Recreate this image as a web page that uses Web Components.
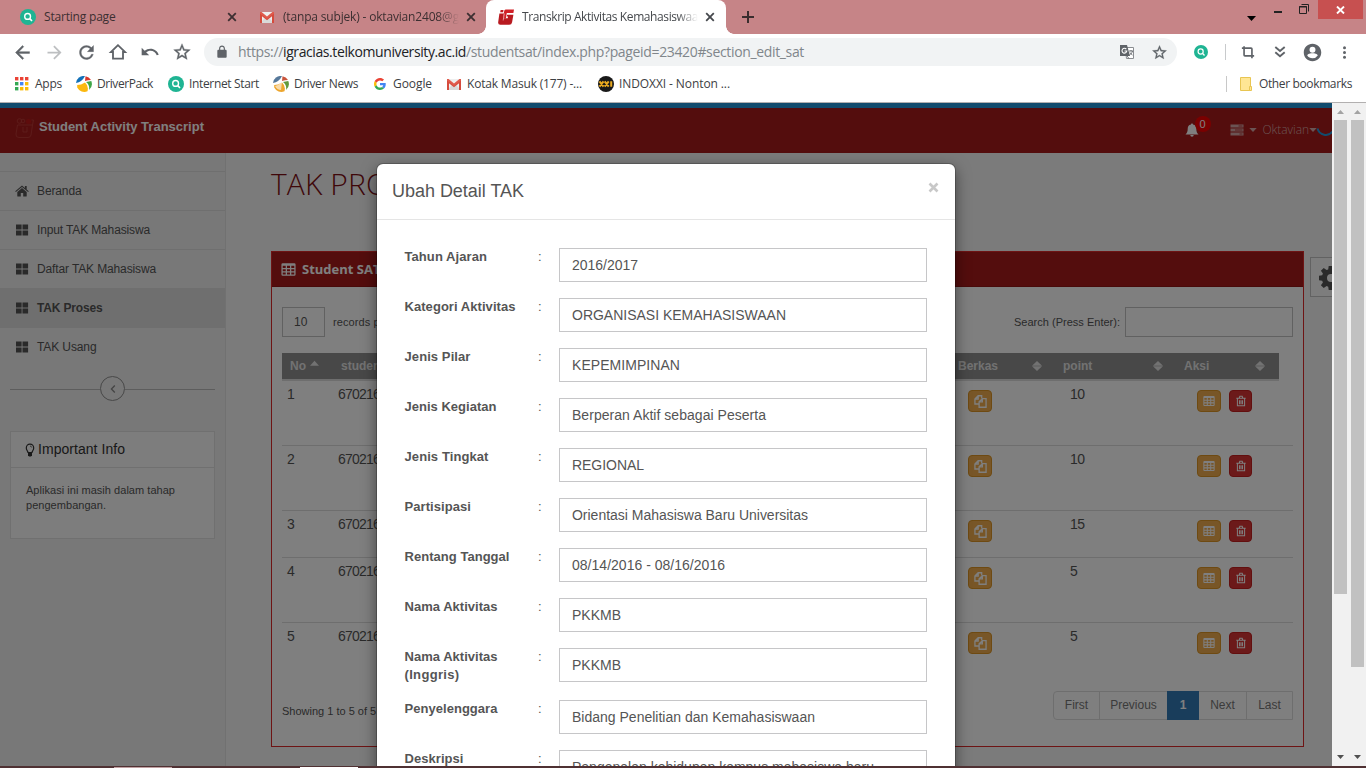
<!DOCTYPE html>
<html lang="id">
<head>
<meta charset="utf-8">
<title>Transkrip Aktivitas Kemahasiswaan</title>
<style>
html,body{margin:0;height:100%;overflow:hidden;background:#fff;font-family:"Liberation Sans",Arial,sans-serif}
</style>
</head>
<body>
<browser-window></browser-window>
<script>
const define=(name,html,setup)=>{
  const tpl=document.createElement('template');
  tpl.innerHTML='<style>*{box-sizing:border-box}</style>'+html;
  customElements.define(name,class extends HTMLElement{
    connectedCallback(){
      if(this.shadowRoot)return;
      const root=this.attachShadow({mode:'open'});
      root.append(tpl.content.cloneNode(true));
      if(setup)setup.call(this,root);
    }
  });
};

/* text run spaced to a given width */
define('fit-text','<style>:host{display:inline-block;white-space:pre;flex:none}</style><slot></slot>',function(){
  const w=parseFloat(this.getAttribute('w'));
  if(!w)return;
  const n=this.textContent.length;
  const nat=this.getBoundingClientRect().width;
  if(nat){this.style.letterSpacing=((w-nat)/n).toFixed(4)+'px';this.style.width=w+'px';}
});

const G='#5f6368';
const mail='<path d="M1 3h14v11H1z" fill="#eee"/><path d="M1 14l5-5 2 1.6L10 9l5 5z" fill="#d9d9d9"/><path d="M1 14V3.4L8 9l7-5.6V14h-2V7.2l-5 4-5-4V14z" fill="#d54b3d"/><path d="M1 3h1.6L8 7.4 13.400 3H15v1.600L8 10 1 4.600z" fill="#e05a4c"/>';
const find='<circle cx="8" cy="8" r="8" fill="#1fb493"/><circle cx="7.600" cy="7.400" r="2.900" fill="none" stroke="#fff" stroke-width="1.400"/><path d="M9.800 9.600l2.200 2.400" stroke="#fff" stroke-width="1.600"/>';
const driver=(c)=>`<circle cx="8" cy="8" r="8" fill="#fff"/><path d="M0 7A8 8 0 0 1 9 0Q6 6 0 7z" fill="${c[0]}"/><path d="M9.500 0.200A8 8 0 0 1 15 4Q12 4 9 5Z" fill="${c[1]}"/><path d="M15.300 5A8 8 0 0 1 13 14Q14 9 10 6Z" fill="${c[2]}"/><path d="M1.200 9Q5 9 9 6.500Q13 10 11.500 15.200A8 8 0 0 1 1.200 11.500z" fill="${c[3]}"/>`;
const icons={
 find:[16,find], mail:[16,mail],
 ig:[16,'<path d="M2.600 1h2.900l-.4 2.300H2.200z" fill="#c01a20"/><path d="M1.400 4.600H6L5.300 9.300h4.400l.3-1.700H8.800l.3-1.900h6.300l-1.300 7.500q-.4 2.600-3 2.600H2.300Q-.2 15.800.2 13z" fill="#b81a20"/><path d="M7.600 .5H16l-.6 3.600H8.800L7.900 9.500H4.900L6.200 2q.2-1.500 1.400-1.500z" fill="#d12027"/><path d="M6.300 4.500L5.200 11.500" stroke="#fff" stroke-width=".5"/>'],
 close:[16,'<path d="M4.200 4.200l7.600 7.600M11.800 4.200l-7.600 7.600" stroke="currentColor" stroke-width="1.800"/>'],
 plus:[16,'<path d="M8 2v12M2 8h12" stroke="#3a2d2e" stroke-width="2"/>'],
 back:[24,`<path d="M20 11H7.830l5.590-5.590L12 4l-8 8 8 8 1.410-1.410L7.830 13H20v-2z" fill="${G}" stroke="${G}" stroke-width=".5"/>`],
 fwd:[24,'<path d="M12 4l-1.410 1.410L16.170 11H4v2h12.170l-5.580 5.590L12 20l8-8z" fill="#bdbfc1"/>'],
 reload:[24,`<path d="M17.650 6.350A7.958 7.958 0 0 0 12 4c-4.420 0-7.990 3.580-7.990 8s3.570 8 7.990 8c3.730 0 6.840-2.550 7.730-6h-2.080A5.990 5.990 0 0 1 12 18c-3.310 0-6-2.690-6-6s2.690-6 6-6c1.660 0 3.140.690 4.220 1.780L13 11h7V4l-2.350 2.350z" fill="${G}" stroke="${G}" stroke-width=".4"/>`],
 home:[24,`<path d="M12 3.800L3.500 12H6v8h12v-8h2.500z" fill="none" stroke="${G}" stroke-width="2.200"/>`],
 undo:[24,`<path d="M12.500 8c-2.650 0-5.050.990-6.900 2.600L2 7v9h9l-3.620-3.620c1.390-1.160 3.160-1.880 5.120-1.880 3.540 0 6.550 2.310 7.600 5.500l2.370-.780C21.080 11.030 17.150 8 12.500 8z" fill="${G}"/>`],
 star:[24,`<path d="M22 9.240l-7.190-.620L12 2 9.190 8.630 2 9.240l5.460 4.730L5.820 21 12 17.270 18.180 21l-1.630-7.030L22 9.240zM12 15.400l-3.760 2.270 1-4.280-3.320-2.880 4.380-.380L12 6.100l1.710 4.040 4.380.380-3.320 2.880 1 4.280L12 15.400z" fill="${G}" stroke="${G}" stroke-width=".4"/>`],
 lock:[24,`<path d="M18 8h-1V6c0-2.760-2.240-5-5-5S7 3.240 7 6v2H6c-1.100 0-2 .900-2 2v10c0 1.100.900 2 2 2h12c1.100 0 2-.900 2-2V10c0-1.100-.900-2-2-2zM9 6c0-1.710 1.290-3.100 3-3.100s3 1.390 3 3.100v2H9z" fill="${G}"/>`],
 trans:[16,`<path d="M6 3.500h8.500v11H7.500z" fill="#fff" stroke="#8a8d91"/><path d="M1 1h7l3 11H1z" fill="${G}"/><path d="M7.300 5.200A2.400 2.400 0 1 0 7.800 7H5.500" fill="none" stroke="#fff" stroke-width="1.100"/><path d="M10 7h4M12 6v1M13.500 7c-.5 2-1.500 3-3 4M11 8.500c.5 1 1.500 2 2.500 2.500M8 12l2 2.500" stroke="${G}" stroke-width=".9" fill="none"/>`],
 crop:[16,`<path d="M1 3.500h10.500q1 0 1 1V15M3.500 1.500v10q0 1 1 1H15" fill="none" stroke="${G}" stroke-width="1.900"/>`],
 chev:[16,`<path d="M3.300 3l4.700 4 4.700-4M3.300 8.300l4.700 4 4.700-4" fill="none" stroke="${G}" stroke-width="1.900"/>`],
 user:[24,`<path d="M12 2C6.480 2 2 6.480 2 12s4.480 10 10 10 10-4.480 10-10S17.520 2 12 2zm0 3.500a3.400 3.400 0 1 1 0 6.800 3.400 3.400 0 0 1 0-6.800zm0 13.200c-2.500 0-4.710-1.280-6-3.220.030-1.990 4-2.680 6-2.680s5.970.690 6 2.680A7.220 7.220 0 0 1 12 18.700z" fill="${G}"/>`],
 dots:[16,`<circle cx="8" cy="3" r="1.600" fill="${G}"/><circle cx="8" cy="8" r="1.600" fill="${G}"/><circle cx="8" cy="13" r="1.600" fill="${G}"/>`],
 apps:[16,[0,1,2].map(r=>[0,1,2].map(c=>`<rect x="${1+c*5}" y="${1+r*5}" width="3.400" height="3.400" fill="${[['#ea4335','#ea4335','#ea4335'],['#34a853','#4285f4','#fbbc05'],['#34a853','#fbbc05','#fbbc05']][r][c]}"/>`).join('')).join('')],
 dp:[16,driver(['#1170b8','#d9372b','#3fa648','#fbb80f'])],
 dn:[16,driver(['#56789a','#c9543b','#629a3c','#eda62e'])+'<path d="M2 10q4-1 7-4l-1 8q-4 0-6-4z" fill="#fff" opacity=".6"/>'],
 google:[48,'<path fill="#EA4335" d="M24 9.500c3.540 0 6.710 1.220 9.210 3.600l6.850-6.850C35.900 2.380 30.470 0 24 0 14.620 0 6.510 5.380 2.560 13.220l7.980 6.190C12.430 13.720 17.740 9.500 24 9.500z"/><path fill="#4285F4" d="M46.980 24.550c0-1.570-.150-3.090-.380-4.550H24v9.020h12.940c-.580 2.960-2.260 5.480-4.780 7.180l7.730 6c4.510-4.180 7.090-10.360 7.090-17.650z"/><path fill="#FBBC05" d="M10.530 28.590c-.480-1.450-.760-2.990-.760-4.590s.270-3.140.760-4.590l-7.980-6.190C.920 16.460 0 20.120 0 24c0 3.880.920 7.540 2.560 10.780l7.970-6.190z"/><path fill="#34A853" d="M24 48c6.480 0 11.930-2.130 15.890-5.810l-7.730-6c-2.150 1.450-4.920 2.300-8.160 2.300-6.260 0-11.570-4.220-13.470-9.910l-7.980 6.190C6.510 42.620 14.620 48 24 48z"/>'],
 xxi:[16,'<circle cx="8" cy="8" r="8" fill="#191919"/><path d="M1.500 5.300l4 5.400M5.500 5.300l-4 5.400M6.700 5.300l4 5.400M10.700 5.300l-4 5.400M13.200 5.300v5.400" stroke="#e9a91f" stroke-width="2"/>'],
 folder:[16,'<path d="M2.500 1.500h10V14.500h-10z" fill="#ffe694" stroke="#e8c552"/><path d="M11.500 10.500h2v4h-2z" fill="#ffe694" stroke="#e8c552"/>'],
 logo:[20,'<g fill="none" stroke="#d8675e" stroke-width=".8" opacity=".45"><circle cx="4.500" cy="3" r="2.300"/><circle cx="8" cy="3" r="1.800"/><path d="M2.500 7h15l-1.500 10q-.5 2.500-3 2.500H4Q.600 19.500 1 16zM8 9v5h4V9M17.500 7l1-5h-2"/></g><circle cx="13.500" cy="3.500" r="2.500" fill="#e01616" opacity=".4"/>'],
 bell:[14,'<path d="M7 0.500c.6 0 1 .4 1 1C10.500 2 11.300 3.700 11.300 6c0 2.800.8 4.200 2.200 5.500H.5C1.900 10.200 2.700 8.800 2.700 6c0-2.300.8-4 3.300-4.500 0-.6.400-1 1-1zM5.300 12h3.400a1.700 1.700 0 0 1-3.400 0z" fill="currentColor"/>'],
 tasks:[14,'<path d="M.5 1.500h13v3H.5zM.5 5.500h13v3H.5zM.5 9.500h13v3H.5z" fill="currentColor"/><path d="M8.500 3h4M5 7h7.500M9.500 11h3" stroke="#a91b1b" stroke-width=".8"/>'],
 house:[14,'<path d="M7 4L2.300 7.900V12q0 .5.5.5H5.800v-3.500h2.400v3.500h3q.5 0 .5-.5V7.900z M7 1.500L.2 7.200l.7.800L7 3l6.100 5 .7-.8L11.700 5.400V2H9.900v2z" fill="currentColor"/>'],
 grid:[14,'<path d="M1 1.500h5.600v5H1zM7.500 1.500h5.600v5H7.500zM1 7.500h5.600v5H1zM7.500 7.500h5.600v5H7.500z" fill="currentColor"/>'],
 bulb:[14,'<path d="M5 9.500C4.800 8 3.300 7 3.300 4.900a3.700 3.700 0 0 1 7.400 0C10.700 7 9.200 8 9 9.500z" fill="none" stroke="currentColor" stroke-width="1.200"/><path d="M5 10h4v2.200L8 13.500H6L5 12.200z" fill="currentColor"/><path d="M7 3q1.500.1 1.700 1.500" stroke="currentColor" stroke-width=".7" fill="none"/>'],
 table:[14,'<path d="M1.600 1.700h10.800q.6 0 .6.600v9.400q0 .6-.6.600H1.600q-.6 0-.6-.6V2.300q0-.6.6-.6zM1 3h12M1 6.100h12M1 9.200h12M5 3v9M9 3v9" fill="none" stroke="currentColor" stroke-width="1.200"/>'],
 files:[14,'<path d="M5 9.700H1V4.300L4.500.8H8.300V3.600M4.500.8v3.500H1M9 4L5.500 7.400v5.800H13V4zM9 4v3.400H5.500" fill="none" stroke="currentColor" stroke-width="1.400"/>'],
 trash:[14,'<path d="M2.800 4.200v8.300h8.400V4.200M1.500 3.700h11M5 3.500l.6-2h2.800l.6 2M5.300 6v4.800M7 6v4.800M8.700 6v4.800" fill="none" stroke="currentColor" stroke-width="1.200"/>'],
 gear:[24,'<path fill-rule="evenodd" d="M9.700 0h4.600l.5 3.400 1.600.7L19.400 2l2.800 2.800-2.100 2.900.7 1.600L24 9.700v4.600l-3.200.5-.7 1.600 2.100 2.900-2.800 2.800-3-2.100-1.600.7-.5 3.300H9.700l-.5-3.300-1.600-.7-2.900 2.100-2.800-2.800 2-2.900-.7-1.600L0 14.300V9.700l3.200-.5.7-1.600L1.900 4.800 4.700 2l2.900 2.100 1.600-.7zM12 8a4 4 0 1 0 0 8 4 4 0 0 0 0-8z" fill="currentColor"/>'],
 left:[14,'<path d="M8.800 3.500L5.400 7l3.400 3.500" fill="none" stroke="currentColor" stroke-width="1.300"/>'],
 caret:[8,'<path d="M.3 2h7.400L4 6z" fill="currentColor"/>'],
 up:[8,'<path d="M0 6h8L4 1.500z" fill="currentColor"/>'],
 sort:[10,'<path d="M0 4.700h10L5 0zM0 5.300h10L5 10z" fill="currentColor"/>']
};
define('ui-icon','<style>:host{display:block;flex:none}svg{display:block}</style>',function(root){
  const i=icons[this.getAttribute('name')],s=this.getAttribute('size')||16;
  const d=document.createElement('div');
  d.innerHTML=`<svg width="${s}" height="${s}" viewBox="0 0 ${i[0]} ${i[0]}">${i[1]}</svg>`;
  root.append(d.firstChild);
});
const makeIcon=(name,size)=>{const e=document.createElement('ui-icon');e.setAttribute('name',name);e.setAttribute('size',size);return e};
const makeText=(text,w)=>{const e=document.createElement('fit-text');e.textContent=text;e.setAttribute('w',w);return e};

define('browser-tabs',`<style>
:host{display:flex;height:34px;background:#c68487;font:12px "Open Sans","Noto Sans",sans-serif;color:#3c2f31;align-items:center;flex:none}
.tab{display:flex;align-items:center;height:34px;flex:none}
.t{line-height:34px;overflow:hidden;flex:none}
.a{width:248px;padding:0 8px 0 20px;border:0;position:relative}
.a .t{margin-left:8px;width:180px}
.a:after{content:"";width:1px;height:20px;background:#965f62;margin-left:7px}
.b{width:238px;padding-left:11px}.b .t{margin-left:8px;width:176px;-webkit-mask:linear-gradient(90deg,#000 88%,transparent)}
.c{width:240px;background:#fff;border-radius:8px 8px 0 0;padding-left:12px;position:relative;color:#45484c}
.c .t{margin-left:8px;width:176px;-webkit-mask:linear-gradient(90deg,#000 88%,transparent)}
.c:before,.c:after{content:"";position:absolute;bottom:0;width:8px;height:8px;background:radial-gradient(circle at 0 0,transparent 7.500px,#fff 8px)}
.c:before{left:-8px}.c:after{right:-8px;background:radial-gradient(circle at 100% 0,transparent 7.500px,#fff 8px)}
.p{margin-left:14px}
.win{margin-left:auto;display:flex;height:34px;align-items:flex-start}
.cl{width:45px;height:19px;background:#c75050;color:#fff;display:grid;place-items:center;margin-right:3px}
</style>
<div class="tab a"><ui-icon name="find"></ui-icon><div class="t"><fit-text w="71.500">Starting page</fit-text></div><ui-icon name="close"></ui-icon></div>
<div class="tab b"><ui-icon name="mail"></ui-icon><div class="t"><fit-text w="176">(tanpa subjek) - oktavian2408@g</fit-text></div><ui-icon name="close" style="margin-left:4px"></ui-icon></div>
<div class="tab c"><ui-icon name="ig"></ui-icon><div class="t"><fit-text w="176">Transkrip Aktivitas Kemahasiswaa</fit-text></div><ui-icon name="close" style="margin-left:4px"></ui-icon></div>
<ui-icon class="p" name="plus"></ui-icon>
<div class="win">
<svg width="72" height="34"><path d="M1 16h9l-4.500 5z" fill="#000"/><path d="M28 11h8v2h-8z" fill="#222"/><path d="M53.500 6.500h7v7h-7zM53 7h8M55.500 4.500h7v7" fill="none" stroke="#222"/></svg>
<div class="cl"><svg width="9" height="8" viewBox="0 0 9 8"><path d="M1 .5l7 7M8 .5l-7 7" stroke="#fff" stroke-width="1.900"/></svg></div></div>`);

define('browser-toolbar',`<style>
:host{display:flex;height:36px;align-items:center;padding-left:6px;flex:none;background:#fff}
.i{width:32px;height:32px;display:grid;place-items:center;flex:none}
.o{flex:none;width:973px;height:28px;border-radius:14px;background:#f1f3f4;margin-left:6px;display:flex;align-items:center;font:14px "Open Sans","Noto Sans",sans-serif;color:#80868b;padding-left:11px;line-height:28px}
.o b{font-weight:400;color:#202124}
.u{margin-left:9px;flex:1;display:flex}.sep{width:1px;height:16px;background:#c8cacc;margin:0 6px 0 8px}
</style>
<div class="i"><ui-icon name="back" size="21"></ui-icon></div><div class="i"><ui-icon name="fwd" size="21"></ui-icon></div><div class="i"><ui-icon name="reload" size="21"></ui-icon></div><div class="i"><ui-icon name="home" size="20"></ui-icon></div><div class="i"><ui-icon name="undo" size="20"></ui-icon></div><div class="i"><ui-icon name="star" size="20"></ui-icon></div>
<div class="o"><ui-icon name="lock" size="14"></ui-icon><div class="u"><fit-text w="45">https://</fit-text><b><fit-text w="183">igracias.telkomuniversity.ac.id</fit-text></b><fit-text w="338">/studentsat/index.php?pageid=23420#section_edit_sat</fit-text></div><div class="i"><ui-icon name="trans"></ui-icon></div><div class="i"><ui-icon name="star" size="17"></ui-icon></div><div style="width:2px"></div></div>
<div class="i" style="margin-left:8px"><ui-icon name="find" size="14"></ui-icon></div><div class="sep"></div>
<div class="i"><ui-icon name="crop" size="14"></ui-icon></div><div class="i"><ui-icon name="chev" size="16"></ui-icon></div><div class="i"><ui-icon name="user" size="21"></ui-icon></div><div class="i"><ui-icon name="dots" size="15"></ui-icon></div>`);

define('bookmark-item',`<style>:host{display:flex;align-items:center;gap:5px;flex:none}</style>`,function(r){
  const s=this.getAttribute('size')||16,i=makeIcon(this.getAttribute('icon'),s);
  i.style.margin=(16-s)/2+'px';
  r.append(i,makeText(this.getAttribute('label'),this.getAttribute('w')));
});
define('bookmark-bar',`<style>:host{display:flex;height:33px;flex:none;background:#fff;align-items:center;padding:0 14px 4px 14px;border-bottom:1px solid #b2b0b0;font:12px/28px "Open Sans","Noto Sans",sans-serif;color:#3c4043;box-sizing:border-box}
.s{width:1px;height:16px;background:#c8c8c8;margin:0 11px 0 auto}bookmark-item{margin-left:14px}bookmark-item:first-of-type{margin-left:0}</style>
<bookmark-item icon="apps" label="Apps" w="27"></bookmark-item>
<bookmark-item icon="dp" label="DriverPack" w="56"></bookmark-item>
<bookmark-item icon="find" label="Internet Start" w="70" style="margin-left:15px"></bookmark-item>
<bookmark-item icon="dn" label="Driver News" w="64"></bookmark-item>
<bookmark-item icon="google" size="12" label="Google" w="39"></bookmark-item>
<bookmark-item icon="mail" label="Kotak Masuk (177) -..." w="115"></bookmark-item>
<bookmark-item icon="xxi" label="INDOXXI - Nonton ..." w="111" style="margin-left:16px"></bookmark-item>
<div class="s"></div><bookmark-item icon="folder" label="Other bookmarks" w="93" style="margin:0"></bookmark-item>`);

define('scroll-bar',`<style>:host{display:flex;flex-direction:column;width:17px;background:#f1f1f1;align-items:center;flex:none}
.th{width:13px;background:#c1c1c1;flex:none}svg{flex:none;display:block}svg:last-child{margin-top:auto}</style>
<svg width="17" height="17"><path d="M5 11h7l-3.500-4z" fill="#a3a3a3"/></svg><div class="th"></div><svg width="17" height="17"><path d="M5 6h7l-3.500 4z" fill="#505050"/></svg>`,function(r){r.querySelector('.th').style.height=this.getAttribute('thumb')+'px'});

define('app-header',`<style>:host{display:flex;height:50px;flex:none;border-top:5px solid #2299dd;background:#a91b1b;padding-left:15px;color:#fff;font-size:13px;align-items:flex-start;box-sizing:border-box}
.logo{margin-top:10px}.n{font-weight:700;margin:10px 0 0 4px;line-height:18px}
.r{margin-left:auto;display:flex;height:43px;align-items:center;color:#d6a8a8;font:300 12px/16px "Open Sans",sans-serif;position:relative;padding-right:15px}
.bell{position:relative;color:#fff;margin-right:32px}
.bd{position:absolute;left:10px;top:-7px;width:16px;height:16px;border-radius:8px;background:#f40000;color:#fff;font:11px/16px "Liberation Sans",sans-serif;text-align:center}
.sp{position:absolute;right:-2px;top:10px}
</style>
<ui-icon class="logo" name="logo" size="20"></ui-icon><div class="n"><fit-text w="165">Student Activity Transcript</fit-text></div>
<div class="r"><div class="bell"><ui-icon name="bell" size="14"></ui-icon><div class="bd">0</div></div><ui-icon name="tasks" size="14" style="margin-left:-1px"></ui-icon><ui-icon name="caret" size="8" style="margin:0 6px 0 5px"></ui-icon><fit-text w="46.500">Oktavian</fit-text><ui-icon name="caret" size="8"></ui-icon>
<svg class="sp" width="18" height="18"><path d="M1.500 10.500a8.500 8.500 0 0 0 15 3" fill="none" stroke="#29d" stroke-width="2"/></svg></div>`);

define('nav-item',`<style>:host{display:flex;height:39px;border-bottom:1px solid #dfdfdf;align-items:center;padding:0 0 1px 15px;gap:8px;font-size:12px;color:#555;box-sizing:border-box}:host([active]){background:#dfdfdf;font-weight:700}:host([last]){border:0;padding-bottom:2px}</style>`,function(r){
  r.append(makeIcon(this.getAttribute('icon'),14),makeText(this.getAttribute('label'),this.getAttribute('w')));
});
define('side-bar',`<style>:host{display:block;width:226px;flex:none;background:#f0f0f0;border-right:1px solid #e2e2e2;box-sizing:border-box}
.top{height:19px;border-bottom:1px solid #dfdfdf}
.col{display:flex;align-items:center;margin:9px 10px 0;height:25px;color:#888}.col i{flex:1;height:1px;background:#bbb;margin-top:2px}
.c{width:25px;height:25px;border:1px solid #909090;border-radius:50%;display:grid;place-items:center}
.info{margin:30px 10px 0;width:205px;height:108px;border:1px solid #e0e0e0;background:#fafafa;color:#555;font-size:11px;line-height:15px}
.h{height:36px;border-bottom:1px solid #e0e0e0;display:flex;align-items:center;padding-left:12px;gap:1px;font-size:14px;color:#333}
.b{padding:15px 15px 0}
</style><div class="top"></div>
<nav-item icon="house" label="Beranda" w="44.500"></nav-item><nav-item icon="grid" label="Input TAK Mahasiswa" w="113"></nav-item><nav-item icon="grid" label="Daftar TAK Mahasiswa" w="119"></nav-item><nav-item active icon="grid" label="TAK Proses" w="65.500"></nav-item><nav-item last icon="grid" label="TAK Usang" w="59.500"></nav-item>
<div class="col"><i></i><div class="c"><ui-icon name="left" size="14"></ui-icon></div><i></i></div>
<div class="info"><div class="h"><ui-icon name="bulb" size="14"></ui-icon><fit-text w="87">Important Info</fit-text></div><div class="b"><fit-text w="149">Aplikasi ini masih dalam tahap</fit-text><br><fit-text w="80">pengembangan.</fit-text></div></div>`);

define('tool-button',`<style>:host{display:grid;place-items:center;width:24px;height:22px;border-radius:4px;background:#f0ad4e;border:1px solid #dc9425;color:#fff;flex:none;box-sizing:border-box}:host([red]){background:#d83434;border-color:#c41f1f;width:23px}</style>`,function(r){
  r.append(makeIcon(this.getAttribute('icon'),this.getAttribute('icon')=='files'?13:12))});
define('sat-row',`<style>:host{display:grid;grid-template-columns:51px 630px 102px 127px 32px 24px;border-bottom:1px solid #ddd;font-size:14px;color:#555;padding-left:5px;line-height:16px;padding-top:5px;align-items:start;box-sizing:border-box;flex:none}:host([last]){border:0}
.p{letter-spacing:-.5px}
tool-button{margin-top:4px}</style><div class="n"></div><div><fit-text w="70">6702164001</fit-text></div><tool-button icon="files"></tool-button><div class="p"></div><tool-button icon="table"></tool-button><tool-button red icon="trash"></tool-button>`,function(r){
  r.querySelector('.n').textContent=this.getAttribute('n');r.querySelector('.p').textContent=this.getAttribute('point');this.style.height=this.getAttribute('h')+'px'});

define('sat-panel',`<style>:host{display:flex;flex-direction:column;width:1033px;height:496px;border:1px solid #dc2828;background:#fff;font-size:11px;color:#555;flex:none;box-sizing:border-box}
.h{height:35px;background:#a91b1b;border-bottom:1px solid #931414;color:#fff;display:flex;align-items:center;padding-left:9px;gap:6px;font:700 13px "Open Sans",sans-serif;flex:none}
.f{display:flex;align-items:center;height:30px;margin:20px 10px 0;flex:none}
.sel{width:43px;height:30px;border:1px solid #c2c2c2;padding-left:11px;line-height:28px;font-size:12px}
.in{width:168px;height:30px;border:1px solid #c2c2c2;margin-left:5px}
.th{display:grid;grid-template-columns:51px 617px 78px 121px 73px 1fr;width:997px;height:28px;margin:16px 0 0 10px;background:#909090;border-bottom:2px solid #ddd;font-weight:700;font-size:12px;padding-left:8px;line-height:26px;flex:none;color:#e4e4e4}
.th>div{display:flex;align-items:center}.th .s{margin:0 21px 0 -4px}
.rows{margin:0 10px;height:305px;display:flex;flex-direction:column}
.foot{display:flex;align-items:center;margin:4px 10px 0;height:30px}
.pg{display:flex;margin-left:auto;border:1px solid #ddd;border-radius:4px 0 0 4px;height:29px;line-height:27px;color:#777;font-size:12px}
.pg>div{text-align:center;border-left:1px solid #ddd}.pg>div:first-child{border:0}
.pg .on{background:#337ab7;color:#fff;font-weight:700;margin:-1px 0;line-height:29px;border:0}
</style>
<div class="h"><ui-icon name="table" size="15"></ui-icon><fit-text>Student SAT</fit-text></div>
<div class="f"><div class="sel">10</div><fit-text style="margin-left:8px;letter-spacing:.1px">records per page</fit-text><div style="flex:1"></div><fit-text w="106">Search (Press Enter):</fit-text><div class="in"></div></div>
<div class="th"><div>No<ui-icon name="up" size="9" style="margin:-5px 0 0 4px"></ui-icon></div><div>studentid</div><div>Berkas</div><div><ui-icon class="s" name="sort" size="10"></ui-icon>point</div><div><ui-icon class="s" name="sort" size="10"></ui-icon>Aksi</div><div><ui-icon name="sort" size="10" style="margin-left:25px"></ui-icon></div></div>
<div class="rows"><sat-row n="1" point="10" h="65"></sat-row><sat-row n="2" point="10" h="65"></sat-row><sat-row n="3" point="15" h="47"></sat-row><sat-row n="4" point="5" h="65"></sat-row><sat-row last n="5" point="5" h="63"></sat-row></div>
<div class="foot"><fit-text style="padding-top:11px">Showing 1 to 5 of 5 records</fit-text><div class="pg"><div style="width:45px">First</div><div style="width:68px">Previous</div><div class="on" style="width:32px">1</div><div style="width:47px;border:0">Next</div><div style="width:46px">Last</div></div></div>`);

define('form-row',`<style>:host{display:grid;grid-template-columns:134px 21px 368px;height:50px;font-size:13px;line-height:18px;color:#555;flex:none}:host([tall]){height:52px}
.l{font-weight:700;display:flex;flex-direction:column;align-items:flex-start;margin-left:.5px}.i{height:34px;border:1px solid #c6c6c8;font-size:14px;line-height:33px;padding-left:12px;color:#555}</style><div class="l"></div><div class="c">:</div><div class="i"></div>`,function(r){
  const ws=this.getAttribute('lw').split(',');
  this.getAttribute('label').split('|').forEach((t,i)=>r.querySelector('.l').append(makeText(t,ws[i])));
  r.querySelector('.i').append(makeText(this.getAttribute('value'),this.getAttribute('vw')));
});
define('edit-dialog',`<style>:host{display:flex;flex-direction:column;width:578px;height:660px;background:#fff;border-radius:6px 6px 0 0;box-shadow:0 0 0 1px rgba(0,0,0,.2),0 5px 15px rgba(0,0,0,.5);color:#555}
.h{height:56px;border-bottom:1px solid #e5e5e5;display:flex;justify-content:space-between;padding:15px 16px 0 15px;font-size:18px;line-height:24px;flex:none;align-items:flex-start}
.b{padding:28px 0 0 27px;display:flex;flex-direction:column}
</style><div class="h"><fit-text w="132">Ubah Detail TAK</fit-text><svg width="11" height="11" style="margin-top:3px"><path d="M1.500 1.500l8 8M9.500 1.500l-8 8" stroke="#c8c8c8" stroke-width="2.600"/></svg></div>
<div class="b">
<form-row label="Tahun Ajaran" lw="82.500" value="2016/2017" vw="66"></form-row>
<form-row label="Kategori Aktivitas" lw="111" value="ORGANISASI KEMAHASISWAAN" vw="214"></form-row>
<form-row label="Jenis Pilar" lw="66" value="KEPEMIMPINAN" vw="108"></form-row>
<form-row label="Jenis Kegiatan" lw="92" value="Berperan Aktif sebagai Peserta" vw="194"></form-row>
<form-row label="Jenis Tingkat" lw="84" value="REGIONAL" vw="72"></form-row>
<form-row label="Partisipasi" lw="66.500" value="Orientasi Mahasiswa Baru Universitas" vw="236"></form-row>
<form-row label="Rentang Tanggal" lw="105" value="08/14/2016 - 08/16/2016" vw="153"></form-row>
<form-row label="Nama Aktivitas" lw="93" value="PKKMB" vw="49"></form-row>
<form-row tall label="Nama Aktivitas|(Inggris)" lw="93,55" value="PKKMB" vw="49"></form-row>
<form-row label="Penyelenggara" lw="93" value="Bidang Penelitian dan Kemahasiswaan" vw="243"></form-row>
<form-row label="Deskripsi" lw="59" value="Pengenalan kehidupan kampus mahasiswa baru" vw="302"></form-row>
</div>`);

define('app-page',`<style>:host{display:flex;flex-direction:column;width:1332px;height:663px;position:relative;overflow:hidden;flex:none;background:#f6f6f6}
.m{display:flex;height:613px;flex:none}.c{flex:1;padding:13px 0 0 45px;min-width:0}
.t{font:300 30px/36px "Open Sans",sans-serif;color:#7f0f14;height:85px}
.row{display:flex;align-items:flex-start}
.g{width:30px;height:40px;border:1px solid #c4c4c4;background:#fafafa;margin:6px 0 0 6px;padding:8px 0 0 8px;color:#555;overflow:hidden;flex:none}
.ov{position:absolute;inset:0;background:rgba(0,0,0,.5)}
edit-dialog{position:absolute;left:377px;top:61px}
</style><app-header></app-header><div class="m"><side-bar></side-bar><div class="c"><div class="t"><fit-text style="letter-spacing:.1px">TAK PROSES</fit-text></div><div class="row"><sat-panel></sat-panel><div class="g"><ui-icon name="gear" size="24"></ui-icon></div></div></div></div>
<div class="ov"></div><edit-dialog></edit-dialog>`);

define('browser-window',`<style>:host{display:flex;flex-direction:column;width:1366px;height:768px;overflow:hidden}.v{display:flex;height:663px;flex:none}
.k{height:2px;background:#4f3133;display:flex;padding-left:114px;gap:128px;align-items:flex-end}.k i{width:58px;height:1px;background:#c0a0a2}.k i+i{background:#fff}</style>
<browser-tabs></browser-tabs><browser-toolbar></browser-toolbar><bookmark-bar></bookmark-bar>
<div class="v"><app-page></app-page><scroll-bar thumb="474"></scroll-bar><scroll-bar thumb="547"></scroll-bar></div><div class="k"><i></i><i></i></div>`);
</script>
</body>
</html>
